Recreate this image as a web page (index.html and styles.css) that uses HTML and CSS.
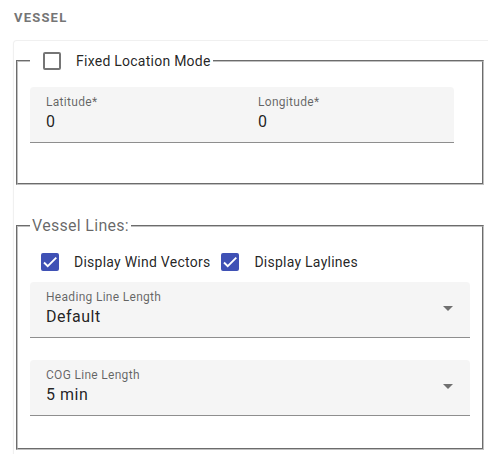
FILE: index.html
```html
<!DOCTYPE html>
<html>
<head>
<meta charset="utf-8">
<link rel="stylesheet" href="styles.css">
</head>
<body>
<h3 class="section-title">VESSEL</h3>
<div class="card">
  <fieldset class="group group-fixed">
    <legend class="legend-check">
      <label class="checkbox">
        <span class="cb-touch"><span class="cb-box"></span></span>
        <span class="cb-label">Fixed Location Mode</span>
      </label>
    </legend>
    <div class="coord-row">
      <div class="field">
        <span class="field-label">Latitude*</span>
        <span class="field-value">0</span>
      </div>
      <div class="field">
        <span class="field-label">Longitude*</span>
        <span class="field-value">0</span>
      </div>
    </div>
  </fieldset>

  <fieldset class="group group-lines">
    <legend class="legend-text">Vessel Lines:</legend>
    <div class="check-row">
      <label class="checkbox">
        <span class="cb-touch"><span class="cb-box checked"><svg viewBox="0 0 24 24" class="cb-mark"><path d="M1.73 12.91 8.1 19.28 22.79 4.59"/></svg></span></span>
        <span class="cb-label">Display Wind Vectors</span>
      </label>
      <label class="checkbox">
        <span class="cb-touch"><span class="cb-box checked"><svg viewBox="0 0 24 24" class="cb-mark"><path d="M1.73 12.91 8.1 19.28 22.79 4.59"/></svg></span></span>
        <span class="cb-label">Display Laylines</span>
      </label>
    </div>
    <div class="field select">
      <span class="field-label">Heading Line Length</span>
      <span class="field-value">Default</span>
      <span class="arrow"></span>
    </div>
    <div class="field select">
      <span class="field-label">COG Line Length</span>
      <span class="field-value">5 min</span>
      <span class="arrow"></span>
    </div>
  </fieldset>
</div>
</body>
</html>
```
FILE: styles.css
```css
html, body {
  margin: 0;
  padding: 0;
  background: #ffffff;
  overflow: hidden;
}
body {
  width: 488px;
  height: 454px;
  font-family: Roboto, "Liberation Sans", sans-serif;
  color: rgba(0, 0, 0, 0.87);
}
.section-title {
  margin: 0;
  padding: 10px 14px 0 14px;
  height: 30px;
  box-sizing: border-box;
  font-size: 13px;
  line-height: 16px;
  font-weight: 700;
  letter-spacing: 1.2px;
  color: #757575;
}
.card {
  margin-left: 13px;
  margin-top: 10px;
  width: 490px;
  height: 414px;
  border: 1px solid #f0f0f0;
  border-bottom: none;
  border-radius: 4px 4px 0 0;
  box-shadow: 0 1px 2px rgba(0, 0, 0, 0.04);
  background: #fff;
  box-sizing: border-box;
}
.group {
  margin: 0 2px 0 2px;
  width: 468px;
  box-sizing: border-box;
  padding: 6px 12px 10px 12px;
  border: 2px groove #c0c0c0;
}
.group-lines {
  margin-top: 31px;
  padding-top: 7px;
}
.legend-check {
  padding: 0 2px;
  height: 40px;
}
.legend-text {
  padding: 0 2px;
  font-size: 16px;
  letter-spacing: 0.3px;
  color: rgba(0, 0, 0, 0.6);
}
.checkbox {
  display: flex;
  align-items: center;
  height: 40px;
}
.cb-touch {
  width: 40px;
  height: 40px;
  display: flex;
  align-items: center;
  justify-content: center;
}
.cb-box {
  width: 18px;
  height: 18px;
  box-sizing: border-box;
  border: 2px solid rgba(0, 0, 0, 0.54);
  border-radius: 2px;
  display: flex;
  align-items: center;
  justify-content: center;
}
.cb-box.checked {
  background: #3f51b5;
  border-color: #3f51b5;
}
.cb-mark {
  width: 14px;
  height: 14px;
  fill: none;
  stroke: #fff;
  stroke-width: 3.2px;
}
.cb-label {
  padding-left: 4px;
  font-size: 14px;
  letter-spacing: 0.25px;
  color: rgba(0, 0, 0, 0.87);
}
.coord-row {
  display: grid;
  grid-template-columns: 212px 212px;
  margin-bottom: 30px;
}
.field {
  position: relative;
  height: 56px;
  box-sizing: border-box;
  background: #f5f5f5;
  border-bottom: 1px solid rgba(0, 0, 0, 0.42);
  border-radius: 4px 4px 0 0;
  padding: 7px 16px 0 16px;
  display: flex;
  flex-direction: column;
}
.coord-row .field:first-child {
  border-top-right-radius: 0;
}
.coord-row .field:last-child {
  border-top-left-radius: 0;
}
.field-label {
  font-size: 12px;
  line-height: 16px;
  letter-spacing: 0.3px;
  color: rgba(0, 0, 0, 0.6);
}
.field-value {
  font-size: 16px;
  line-height: 24px;
  letter-spacing: 0.5px;
  color: rgba(0, 0, 0, 0.87);
}
.select {
  margin-bottom: 22px;
}
.check-row {
  display: flex;
}
.arrow {
  position: absolute;
  right: 17px;
  top: 24px;
  width: 0;
  height: 0;
  border-left: 5px solid transparent;
  border-right: 5px solid transparent;
  border-top: 5px solid rgba(0, 0, 0, 0.54);
}
```
